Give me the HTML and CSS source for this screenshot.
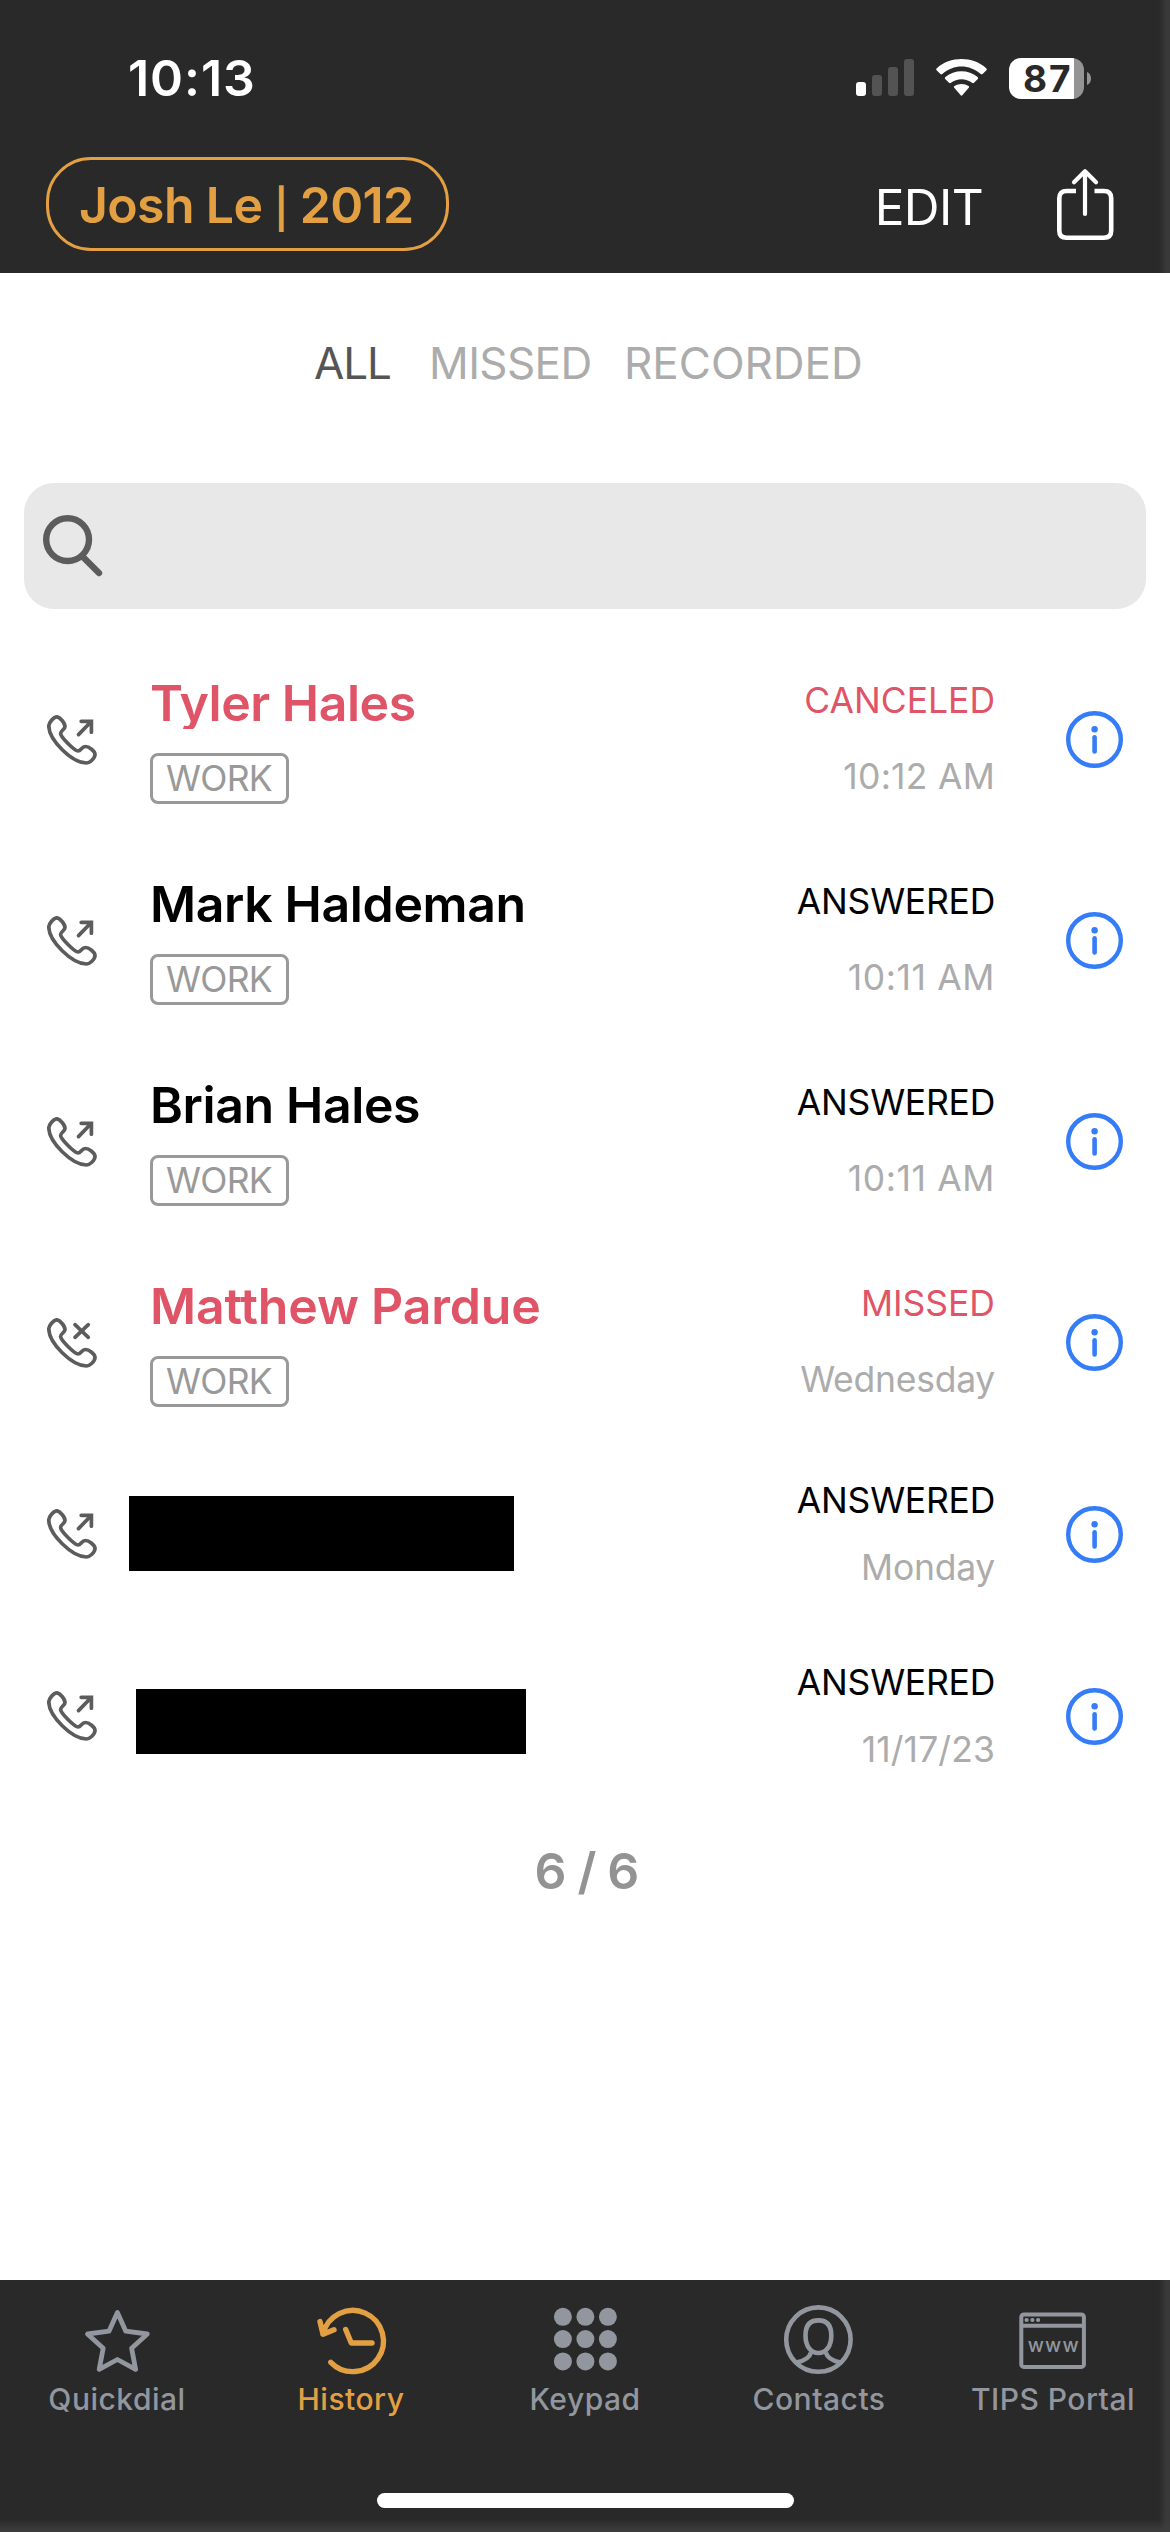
FILE: index.html
```html
<!DOCTYPE html>
<html lang="en">
<head>
<meta charset="utf-8">
<title>History</title>
<link rel="stylesheet" href="styles.css">
</head>
<body>
<svg class="sprite" aria-hidden="true">
  <symbol id="handset" viewBox="0 0 50 50">
    <path d="M1.8 11C1.8 8 6.5 1.8 9.7 1.8C13 1.8 18 8.5 18 11.5C18 14.5 13.6 15.5 13.6 18.5C13.6 22 27.5 36 31 36C34 36 34.5 31.5 38.5 31.5C42 31.5 48 36 48 39.5C48 43.5 42.5 48 39.5 48C25 48 1.8 25 1.8 11Z"/>
  </symbol>
  <symbol id="outgoing" viewBox="0 0 50 50">
    <use href="#handset"/>
    <path d="M34.2 6.3H44.4V17.2M44 6.7L31.5 19.6"/>
  </symbol>
  <symbol id="missed" viewBox="0 0 50 50">
    <use href="#handset"/>
    <path d="M28 6.7L41.3 19.3M41.3 6.7L28 19.3"/>
  </symbol>
  <symbol id="info" viewBox="0 0 57 57">
    <circle cx="28.5" cy="28.5" r="26.3" fill="none" stroke="currentColor" stroke-width="4.4"/>
    <circle cx="28.6" cy="18.2" r="3.2" fill="currentColor"/>
    <path d="M28.6 26.2V40.5" fill="none" stroke="currentColor" stroke-width="4.6" stroke-linecap="round"/>
  </symbol>
</svg>

<div class="screen">
  <header class="header">
    <div class="status-bar">
      <span class="clock">10:13</span>
      <div class="indicators">
        <svg class="signal" viewBox="0 0 58 38">
          <rect x="0" y="23" width="10" height="14" rx="3" fill="#fff"/>
          <rect x="16" y="16" width="10" height="21" rx="3"/>
          <rect x="32" y="8" width="10" height="29" rx="3"/>
          <rect x="48" y="0" width="10" height="37" rx="3"/>
        </svg>
        <svg class="wifi" viewBox="0 0 51 38">
          <path d="M0.6 11.3Q-0.3 10.3 0.8 9.3C14-3 37-3 50.2 9.3Q51.3 10.3 50.4 11.3L46.6 15Q45.7 15.8 44.7 15C33.5 5 17.5 5 6.3 15Q5.3 15.8 4.4 15Z"/>
          <path d="M9.2 20Q8.3 19 9.4 18.1C18.5 10.3 32.5 10.3 41.6 18.1Q42.7 19 41.8 20L38 23.8Q37.1 24.7 36 23.8C30 18.9 21 18.9 15 23.8Q13.9 24.7 13 23.8Z"/>
          <path d="M18.2 28.8Q17.3 27.9 18.4 27.1C22.5 24.3 28.5 24.3 32.6 27.1Q33.7 27.9 32.8 28.8L26.5 36.1Q25.5 37.2 24.5 36.1Z"/>
        </svg>
        <div class="battery"><span class="battery-level">87</span></div>
        <svg class="battery-tip" viewBox="0 0 4 13"><path d="M0 0C5.3 2 5.3 11 0 13Z"/></svg>
      </div>
    </div>
    <div class="nav-bar">
      <span class="account">Josh Le <span class="bar">|</span> 2012</span>
      <span class="edit">EDIT</span>
      <svg class="share" viewBox="0 0 57 73">
        <path d="M19 23H9.5Q2.3 23 2.3 30.2V62.5Q2.3 69.7 9.5 69.7H47Q54.2 69.7 54.2 62.5V30.2Q54.2 23 47 23H37.5" stroke-width="4.6"/>
        <path d="M28 46V4M17 14.2L28 3.2L39 14.2" stroke-width="4.2" stroke-linecap="round" stroke-linejoin="round"/>
      </svg>
    </div>
  </header>

  <main class="content">
    <nav class="filters">
      <span class="filter filter-all">ALL</span>
      <span class="filter filter-missed">MISSED</span>
      <span class="filter">RECORDED</span>
    </nav>

    <div class="search">
      <svg class="search-icon" viewBox="0 0 60 62">
        <circle cx="24.6" cy="24.6" r="21.4" stroke-width="6.4"/>
        <path d="M40 42L56 58" stroke-width="6.4" stroke-linecap="round"/>
      </svg>
    </div>

    <div class="call">
      <svg class="call-icon"><use href="#outgoing"/></svg>
      <div class="person"><div class="name tyler alert">Tyler Hales</div><span class="badge">WORK</span></div>
      <div class="meta"><div class="state alert">CANCELED</div><div class="time time-12">10:12 AM</div></div>
      <svg class="info"><use href="#info"/></svg>
    </div>
    <div class="call">
      <svg class="call-icon"><use href="#outgoing"/></svg>
      <div class="person"><div class="name">Mark Haldeman</div><span class="badge">WORK</span></div>
      <div class="meta"><div class="state answered">ANSWERED</div><div class="time time-11">10:11 AM</div></div>
      <svg class="info"><use href="#info"/></svg>
    </div>
    <div class="call">
      <svg class="call-icon"><use href="#outgoing"/></svg>
      <div class="person"><div class="name">Brian Hales</div><span class="badge">WORK</span></div>
      <div class="meta"><div class="state answered">ANSWERED</div><div class="time time-11">10:11 AM</div></div>
      <svg class="info"><use href="#info"/></svg>
    </div>
    <div class="call">
      <svg class="call-icon"><use href="#missed"/></svg>
      <div class="person"><div class="name matthew alert">Matthew Pardue</div><span class="badge">WORK</span></div>
      <div class="meta"><div class="state alert">MISSED</div><div class="time">Wednesday</div></div>
      <svg class="info"><use href="#info"/></svg>
    </div>
    <div class="call compact">
      <svg class="call-icon"><use href="#outgoing"/></svg>
      <div class="hidden-name hidden-tall"></div>
      <div class="meta"><div class="state answered">ANSWERED</div><div class="time">Monday</div></div>
      <svg class="info"><use href="#info"/></svg>
    </div>
    <div class="call compact">
      <svg class="call-icon"><use href="#outgoing"/></svg>
      <div class="hidden-name hidden-short"></div>
      <div class="meta"><div class="state answered">ANSWERED</div><div class="time date-time">11/17/23</div></div>
      <svg class="info"><use href="#info"/></svg>
    </div>

    <div class="count">6 / 6</div>
  </main>

  <footer class="tab-bar">
    <div class="tabs">
      <div class="tab">
        <svg class="tab-icon" viewBox="0 0 80 80"><path d="M40.4 12.4L48.8 31.2L70.3 34L54.6 48.3L58.6 69.3L40.4 59.5L22.2 69.3L26.2 48.3L10.5 34L32 31.2Z" stroke-width="4.8" stroke-linejoin="round"/></svg>
        <span>Quickdial</span>
      </div>
      <div class="tab active">
        <svg class="tab-icon" viewBox="0 0 80 80"><path d="M19.8 62.3A30.6 30.6 0 1 0 12 34.2M9 21.6L12 34.2L23 29.7M34.7 29.5L40.3 43H61" stroke-width="5.4" stroke-linecap="round" stroke-linejoin="round"/></svg>
        <span>History</span>
      </div>
      <div class="tab">
        <svg class="tab-icon" viewBox="0 0 80 80"><g fill="currentColor" stroke="none">
          <circle cx="17.9" cy="16.8" r="9"/><circle cx="40.4" cy="16.8" r="9"/><circle cx="62.9" cy="16.8" r="9"/>
          <circle cx="17.9" cy="39.1" r="9"/><circle cx="40.4" cy="39.1" r="9"/><circle cx="62.9" cy="39.1" r="9"/>
          <circle cx="17.9" cy="61.4" r="9"/><circle cx="40.4" cy="61.4" r="9"/><circle cx="62.9" cy="61.4" r="9"/>
        </g></svg>
        <span>Keypad</span>
      </div>
      <div class="tab">
        <svg class="tab-icon" viewBox="0 0 80 80"><g stroke-width="4.6"><circle cx="39.4" cy="39.6" r="32.2"/>
          <path d="M39.4 20.4C48 20.4 52.3 25.5 52.3 35.5C52.3 46 47.3 53 39.4 53C31.5 53 26.5 46 26.5 35.5C26.5 25.5 30.8 20.4 39.4 20.4Z"/>
          <path d="M32 52.5C30.5 58 24.5 61 17.3 62.6M46.8 52.5C48.3 58 54.3 61 61.5 62.6"/></g></svg>
        <span>Contacts</span>
      </div>
      <div class="tab">
        <svg class="tab-icon" viewBox="0 0 80 80"><g stroke-width="4"><rect x="8.3" y="14.4" width="62.6" height="52.5" rx="2.5"/><path d="M8.3 25.7H70.9"/></g>
          <g fill="currentColor" stroke="none"><circle cx="13.6" cy="20" r="2.1"/><circle cx="19.4" cy="20" r="2.1"/><circle cx="25.1" cy="20" r="2.1"/>
          <text class="www" x="14.7" y="52">www</text></g></svg>
        <span>TIPS Portal</span>
      </div>
    </div>
    <div class="home-indicator"></div>
  </footer>
</div>
</body>
</html>
```
FILE: styles.css
```css
* { box-sizing: border-box; }

body {
  margin: 0;
  background: #fff;
  font-family: Inter, "Liberation Sans", sans-serif;
}

svg { display: block; flex: none; fill: none; }

.sprite { width: 0; height: 0; position: absolute; }

.screen {
  width: 1170px;
  height: 2532px;
  display: flex;
  flex-direction: column;
  overflow: hidden;
}

/* Header */
.header {
  height: 273px;
  background: linear-gradient(to right, #292929 1159px, #393939 1166px);
  color: #fff;
}

.status-bar {
  height: 156px;
  padding: 0 79px 0 128px;
  display: flex;
  align-items: center;
  justify-content: space-between;
}

.clock { font-size: 50px; font-weight: 600; letter-spacing: 0.95px; line-height: 60px; }

.indicators { display: flex; align-items: center; }
.signal { width: 58px; height: 38px; fill: #535353; }
.wifi { width: 51px; height: 38px; margin-left: 22px; fill: #fff; }

.battery {
  width: 75px;
  height: 41px;
  margin-left: 22px;
  border-radius: 12px;
  background: linear-gradient(to right, #fff 65px, #949494 65px);
  color: #292929;
}
.battery-level {
  display: block;
  padding-left: 14px;
  font-size: 37px;
  font-weight: 700;
  line-height: 41px;
  letter-spacing: 1.8px;
}
.battery-tip { width: 4px; height: 13px; margin-left: 3px; fill: #949494; }

.nav-bar {
  height: 117px;
  padding: 1px 56px 0 46px;
  display: flex;
  align-items: flex-start;
}
.account {
  width: 403px;
  height: 94px;
  padding: 1px 0 0 30px;
  border: 3px solid #e3a042;
  border-radius: 45px;
  color: #e3a042;
  font-size: 50px;
  font-weight: 600;
  letter-spacing: -0.65px;
  line-height: 88px;
  white-space: nowrap;
}
.account .bar { font-size: 39px; line-height: 1; }
.edit {
  margin-left: auto;
  padding-top: 20px;
  font-size: 49.5px;
  letter-spacing: -0.6px;
  line-height: 60px;
}
.share { width: 57px; height: 73px; margin: 11px 0 0 74px; stroke: #fff; }

/* Filters and search */
.content { flex: 1; }

.filters {
  height: 180px;
  padding-left: 314px;
  display: flex;
  align-items: center;
  color: #acacac;
  font-size: 44px;
  line-height: 60px;
}
.filter-all { width: 115px; color: #555; letter-spacing: -1.1px; }
.filter-missed { width: 195px; letter-spacing: -0.6px; }

.search {
  height: 126px;
  margin: 30px 24px;
  padding: 32px 0 0 19px;
  border-radius: 30px;
  background: #e8e8e8;
}
.search-icon { width: 60px; height: 62px; stroke: #5c5c5c; }

/* Call list */
.call {
  height: 201px;
  padding: 0 47px;
  display: flex;
  align-items: center;
}
.call.compact { height: 182px; }

.call-icon {
  width: 50px;
  height: 50px;
  stroke: #5c5c5c;
  stroke-width: 3.7;
  stroke-linecap: round;
}

.person { margin-left: 53px; padding-top: 2px; }
.name {
  height: 52px;
  margin-bottom: 24px;
  font-size: 50px;
  font-weight: 600;
  letter-spacing: -0.38px;
  line-height: 52px;
  white-space: nowrap;
}
.name.tyler { overflow: hidden; letter-spacing: -0.45px; }
.name.matthew { letter-spacing: -0.2px; }
.alert { color: #df5467; }

.badge {
  display: block;
  width: 139px;
  height: 51px;
  padding-left: 13px;
  border: 3px solid #999;
  border-radius: 8px;
  color: #999;
  font-size: 35.5px;
  letter-spacing: -0.7px;
  line-height: 45px;
}

.hidden-name { background: #000; }
.hidden-tall { width: 385px; height: 75px; margin: 0 0 1px 32px; }
.hidden-short { width: 390px; height: 65px; margin: 11px 0 0 39px; }

.meta {
  margin-left: auto;
  padding-bottom: 2px;
  text-align: right;
  font-size: 35.5px;
  line-height: 40px;
}
.state { margin-bottom: 36px; }
.answered { letter-spacing: -0.25px; }
.time { color: #acacac; letter-spacing: -0.25px; }
.time-12 { letter-spacing: 0.25px; }
.time-11 { letter-spacing: 0.6px; }
.date-time { letter-spacing: 0.1px; }
.compact .meta { padding-bottom: 0; }
.compact .state { margin-bottom: 27px; }

.info { width: 57px; height: 57px; margin-left: 71px; color: #357cf8; }

.count {
  padding-left: 3px;
  color: #939393;
  font-size: 50px;
  font-weight: 600;
  letter-spacing: -0.8px;
  line-height: 128px;
  text-align: center;
}

/* Bottom tab bar */
.tab-bar {
  height: 252px;
  padding-top: 20px;
  background:
    linear-gradient(to bottom, transparent 239px, #3e3e3e 252px),
    linear-gradient(to right, #292929 1159px, #393939 1166px);
}
.tabs { display: grid; grid-template-columns: repeat(5, 1fr); }
.tab {
  display: flex;
  flex-direction: column;
  align-items: center;
  color: #92979f;
  font-size: 30px;
  font-weight: 500;
  letter-spacing: 0.5px;
  line-height: 40px;
  white-space: nowrap;
}
.tab span { margin-top: -1px; }
.tab.active { color: #e3a042; }
.tab-icon { width: 80px; height: 80px; stroke: currentColor; }
.www { font-size: 19.5px; font-weight: 500; letter-spacing: 1.2px; }

.home-indicator {
  width: 417px;
  height: 15px;
  margin: 74px auto 0;
  border-radius: 8px;
  background: #fff;
}
```
